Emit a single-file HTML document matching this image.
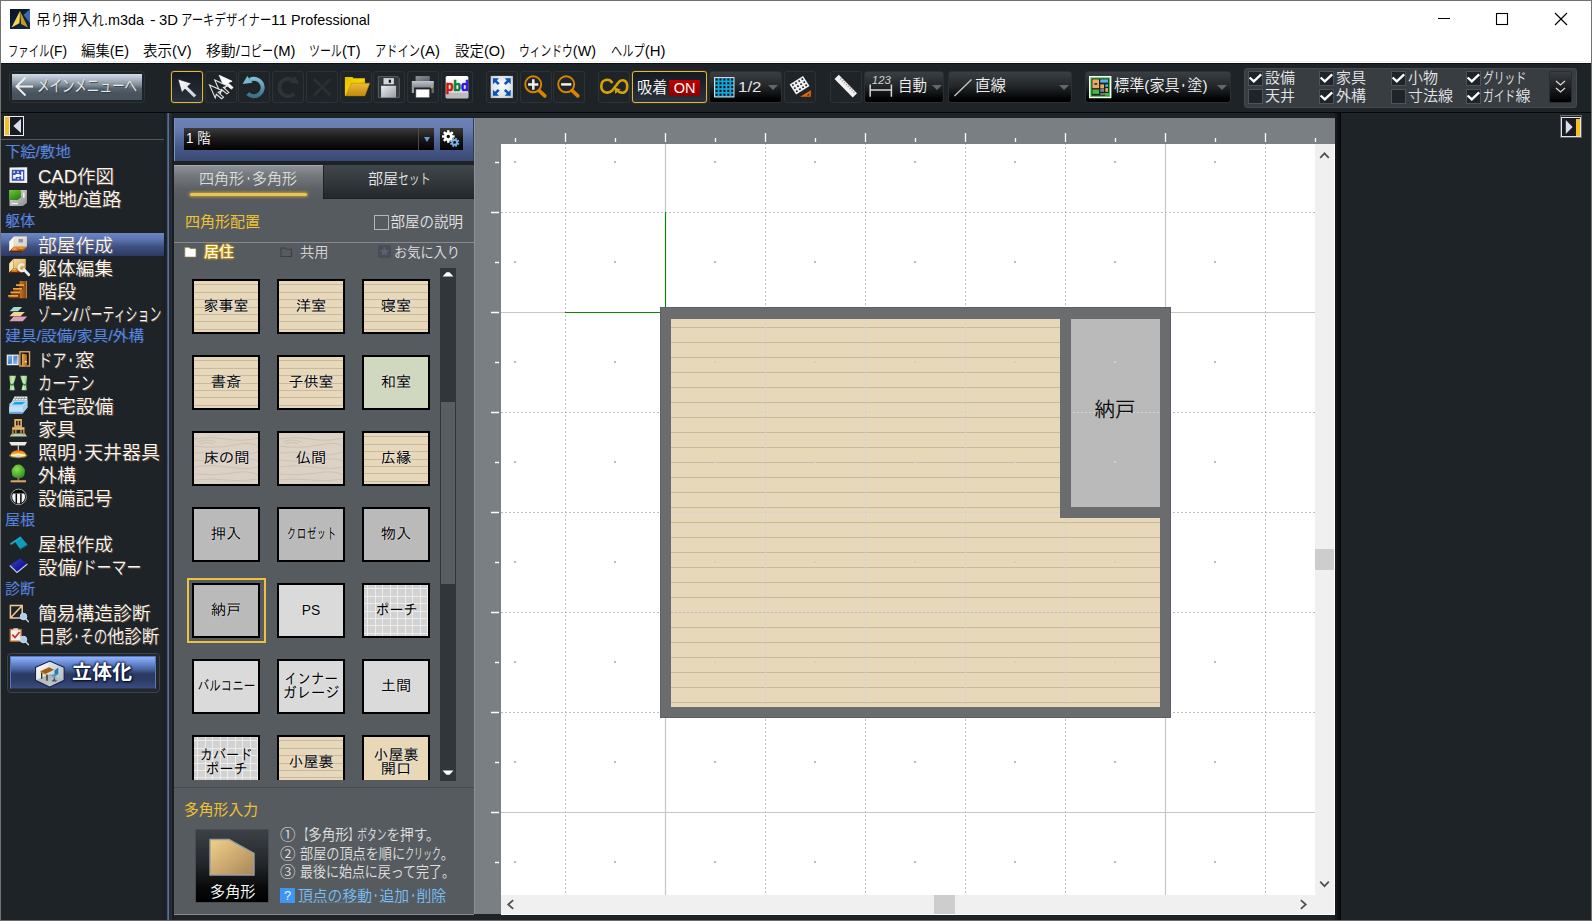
<!DOCTYPE html>
<html lang="ja"><head><meta charset="utf-8"><title>3D アーキデザイナー11 Professional</title>
<style>
html,body{margin:0;padding:0}
body{width:1592px;height:921px;position:relative;overflow:hidden;background:#1e2328;font-family:"Liberation Sans","Noto Sans CJK JP",sans-serif;font-size:14px;color:#fff;-webkit-font-smoothing:antialiased}
div,span,svg{box-sizing:border-box}
.a{position:absolute}
.kn{display:inline-block;transform-origin:0 50%;white-space:nowrap}
.t{position:absolute;white-space:nowrap;line-height:1}
#title{left:1px;top:1px;width:1590px;height:62px;background:#fff;color:#000;border-bottom:0}
#tb{left:1px;top:63px;width:1590px;height:50px;background:#1e2328;border-top:1px solid #0c1014;border-bottom:1px solid #050607}
.btn{position:absolute;top:71px;height:32px;border:1px solid #2d3237;border-radius:3px;background:#1f2429}
.dd{position:absolute;top:71px;height:32px;border:1px solid #2b3035;border-radius:3px;background:linear-gradient(#3a3f43 0%,#24282b 45%,#050505 88%,#000 100%)}
.dd .arr{position:absolute;top:12.5px;width:0;height:0;border-left:5.5px solid transparent;border-right:5.5px solid transparent;border-top:5px solid #63676b}
.sel{border:1px solid #e2b53c;background:linear-gradient(#161a20,#2a323c);box-shadow:0 0 1px #e2b53c}
.ck{position:absolute;width:15px;height:15px;border:1px solid #4e5358;background:#1f2428}
.ckt{position:absolute;font-size:15px;line-height:1;color:#e4e6e8;white-space:nowrap;font-weight:350}
.sh{position:absolute;left:5px;font-size:15px;line-height:1;color:#5a8be6;white-space:nowrap;text-shadow:1px 0 0 rgba(90,110,200,.35)}
.si{position:absolute;left:38px;font-size:19px;line-height:1;color:#f6f6f6;white-space:nowrap;text-shadow:1px 1px 0 rgba(205,140,70,.55)}
.tile{position:absolute;width:68px;height:55px;border:2px solid #000;color:#000;font-family:"Liberation Sans","IPAGothic",sans-serif;font-size:14px;line-height:14px;text-align:center;white-space:nowrap;overflow:hidden}
.tile span.l{position:absolute;left:0;right:0;text-shadow:0 0 2px rgba(255,255,255,.7)}
.wood{background:repeating-linear-gradient(180deg,#e8d8b8 0,#e8d8b8 6.4px,#cdbda4 6.4px,#cdbda4 7.4px) 0 -2.6px}
.ins{position:absolute;left:280px;font-size:14px;line-height:1;color:#e0e0e0;white-space:nowrap}
</style></head><body>

<div class="a" style="left:0;top:0;width:1592px;height:921px;border:1px solid #727272;border-bottom-color:#6a6a6a;z-index:50;pointer-events:none"></div>
<div id="title" class="a">
<div class="a" style="left:9px;top:8px;width:20px;height:20px"><svg width="20" height="20" viewBox="0 0 20 20"><defs><linearGradient id="ag" x1="0" y1="0" x2="1" y2="1"><stop offset="0" stop-color="#0a1424"/><stop offset="1" stop-color="#12284a"/></linearGradient><linearGradient id="ay" x1="0" y1="0" x2="1" y2="0"><stop offset="0" stop-color="#f8e87a"/><stop offset=".5" stop-color="#e8c030"/><stop offset="1" stop-color="#b8860c"/></linearGradient></defs><rect width="20" height="20" fill="url(#ag)"/><path d="M20 0v14L13.5 6z" fill="#3d6aa8"/><path d="M10 2L1.5 18.5l8.2-4.5z" fill="#f0d850"/><path d="M10 2l8 16.5-7-3.5z" fill="#c89a18"/><path d="M9.7 14L9.9 9l1.1 6.2z" fill="#0a1424"/></svg></div>
<div class="t" style="left:35.0px;top:10.5px;font-size:15px;font-weight:350;color:#000;transform:scaleX(0.9846);transform-origin:0 0;">吊<span class="kn" style="transform:scaleX(0.800);margin-right:-3.0px">り</span>押入<span class="kn" style="transform:scaleX(0.800);margin-right:-3.0px">れ</span></div>
<div class="t" style="left:103.0px;top:10.5px;font-size:15px;font-weight:350;color:#000;transform:scaleX(0.9592);transform-origin:0 0;">.m3da</div>
<div class="t" style="left:148.5px;top:10.5px;font-size:15px;font-weight:350;color:#000;transform:scaleX(1.1000);transform-origin:0 0;">-</div>
<div class="t" style="left:157.5px;top:10.5px;font-size:15px;font-weight:350;color:#000;transform:scaleX(0.9902);transform-origin:0 0;">3D</div>
<div class="t" style="left:180.0px;top:10.5px;font-size:15px;font-weight:350;color:#000;transform:scaleX(1.0134);transform-origin:0 0;"><span class="kn" style="transform:scaleX(0.750);margin-right:-30.0px">アーキデザイナー</span></div>
<div class="t" style="left:269.5px;top:10.5px;font-size:15px;font-weight:350;color:#000;transform:scaleX(1.0271);transform-origin:0 0;">11</div>
<div class="t" style="left:289.5px;top:10.5px;font-size:15px;font-weight:350;color:#000;transform:scaleX(0.9570);transform-origin:0 0;">Professional</div>
<svg class="a" style="left:1420px;top:0" width="170" height="37" viewBox="0 0 170 37"><path d="M17 17.5h12" stroke="#000" stroke-width="1"/><rect x="75.5" y="12.500" width="11" height="11" fill="none" stroke="#000" stroke-width="1.100"/><path d="M134 12l12 12M146 12l-12 12" stroke="#000" stroke-width="1.200"/></svg>
<div class="t" style="left:7.0px;top:42.0px;font-size:15px;font-weight:350;color:#000;transform:scaleX(0.9194);transform-origin:0 0;"><span class="kn" style="transform:scaleX(0.750);margin-right:-15.0px">ファイル</span>(F)</div>
<div class="t" style="left:80.0px;top:42.0px;font-size:15px;font-weight:350;color:#000;transform:scaleX(0.9600);transform-origin:0 0;">編集(E)</div>
<div class="t" style="left:142.0px;top:42.0px;font-size:15px;font-weight:350;color:#000;transform:scaleX(0.9700);transform-origin:0 0;">表示(V)</div>
<div class="t" style="left:205.0px;top:42.0px;font-size:15px;font-weight:350;color:#000;transform:scaleX(0.9890);transform-origin:0 0;">移動/<span class="kn" style="transform:scaleX(0.750);margin-right:-11.2px">コピー</span>(M)</div>
<div class="t" style="left:308.0px;top:42.0px;font-size:15px;font-weight:350;color:#000;transform:scaleX(0.9720);transform-origin:0 0;"><span class="kn" style="transform:scaleX(0.750);margin-right:-11.2px">ツール</span>(T)</div>
<div class="t" style="left:374.0px;top:42.0px;font-size:15px;font-weight:350;color:#000;transform:scaleX(0.9998);transform-origin:0 0;"><span class="kn" style="transform:scaleX(0.750);margin-right:-15.0px">アドイン</span>(A)</div>
<div class="t" style="left:454.0px;top:42.0px;font-size:15px;font-weight:350;color:#000;transform:scaleX(0.9676);transform-origin:0 0;">設定(O)</div>
<div class="t" style="left:518.0px;top:42.0px;font-size:15px;font-weight:350;color:#000;transform:scaleX(0.9580);transform-origin:0 0;"><span class="kn" style="transform:scaleX(0.750);margin-right:-18.8px">ウィンドウ</span>(W)</div>
<div class="t" style="left:610.0px;top:42.0px;font-size:15px;font-weight:350;color:#000;transform:scaleX(0.9971);transform-origin:0 0;"><span class="kn" style="transform:scaleX(0.750);margin-right:-11.2px">ヘルプ</span>(H)</div>
<div class="a" style="left:0;top:60px;width:1590px;height:1px;background:#f0f0f0"></div>
</div>
<div id="tb" class="a"></div>
<div class="a" style="left:9px;top:71px;width:136px;height:32px;border:1px solid #2d3237;border-radius:4px"></div>
<div class="a" style="left:11.5px;top:74px;width:130px;height:25.5px;background:linear-gradient(#d2dce6 0%,#a9b5c1 22%,#7c8894 44%,#56626e 56%,#48535e 75%,#47515b 100%)"><svg class="a" style="left:3.5px;top:2px" width="20" height="21" viewBox="0 0 20 21"><path d="M18 10.500H2M10.500 1.500L1.500 10.500l9 9" fill="none" stroke="#ececec" stroke-width="2"/></svg></div>
<div class="t" style="left:37.0px;top:77.5px;font-size:16.5px;font-weight:350;color:#ececec;transform:scaleX(1.0151);transform-origin:0 0;text-shadow:1px 1px 1px rgba(40,50,60,.8)"><span class="kn" style="transform:scaleX(0.750);margin-right:-33.0px">メインメニューへ</span></div>
<div class="btn sel" style="left:171.0px;width:32.0px"><svg class="a" style="left:0;top:0" width="30" height="30" viewBox="0 0 30 30"><defs><linearGradient id="sg" x1="0" y1="0" x2="1" y2="1"><stop offset="0" stop-color="#fff"/><stop offset="1" stop-color="#c8ccd0"/></linearGradient></defs><path d="M6 7.2L19.2 11.2L15.6 14.6L24.6 23.2L22 25.8L13 17L9.8 20.6z" fill="url(#sg)" stroke="#1a1e22" stroke-width=".6"/></svg></div>
<div class="btn " style="left:204.5px;width:32.0px"><svg class="a" style="left:0;top:0" width="30" height="30" viewBox="0 0 30 30"><path transform="translate(13.2,3.3)" d="M0 0L12.9 5.9L8.6 7.4L14 12.3L12.1 13.8L6.8 9.4L5.7 13z" fill="#fff" stroke="#fff" stroke-width=".8"/><path transform="translate(8.8,8.1)" d="M0 0L12.9 5.9L8.6 7.4L14 12.3L12.1 13.8L6.8 9.4L5.7 13z" fill="#1f2429" stroke="#e6e6e6" stroke-width="1.1"/><path transform="translate(3.5,12.9)" d="M0 0L12.9 5.9L8.6 7.4L14 12.3L12.1 13.8L6.8 9.4L5.7 13z" fill="#1f2429" stroke="#e6e6e6" stroke-width="1.1"/></svg></div>
<div class="btn " style="left:238.3px;width:32.0px"><svg class="a" style="left:0;top:0" width="30" height="30" viewBox="0 0 30 30"><defs><linearGradient id="ug" x1="0" y1="0" x2="0" y2="1"><stop offset="0" stop-color="#7cbcd6"/><stop offset="1" stop-color="#3a7088"/></linearGradient></defs><path d="M11.05 7.75A8.7 8.7 0 1 1 8.74 21.54" fill="none" stroke="url(#ug)" stroke-width="4"/><path d="M3.6 12L8.2 3.9L13.5 10.7z" fill="#78b8d2"/></svg></div>
<div class="btn " style="left:272.0px;width:32.0px"><svg class="a" style="left:0;top:0" width="30" height="30" viewBox="0 0 30 30"><path d="M18.95 7.75A8.7 8.7 0 1 0 21.26 21.54" fill="none" stroke="#2e3338" stroke-width="4"/><path d="M26.4 12L21.8 3.9L16.5 10.7z" fill="#2e3338"/></svg></div>
<div class="btn " style="left:305.8px;width:32.0px"><svg class="a" style="left:0;top:0" width="30" height="30" viewBox="0 0 30 30"><path d="M7 7l16.500 16.500M23.500 7L7 23.500" stroke="#2a2f34" stroke-width="3"/></svg></div>
<div class="btn " style="left:339.5px;width:32.0px"><svg class="a" style="left:0;top:0" width="30" height="30" viewBox="0 0 30 30"><defs><linearGradient id="og" x1="0" y1="0" x2="0" y2="1"><stop offset="0" stop-color="#ecba3a"/><stop offset="1" stop-color="#c48c0a"/></linearGradient><linearGradient id="ob" x1="0" y1="0" x2="1" y2="1"><stop offset="0" stop-color="#e6bc00"/><stop offset=".5" stop-color="#f6d400"/><stop offset="1" stop-color="#d8aa00"/></linearGradient></defs><path d="M3.9 5h7.600l1 1.300h11.400v17.600H3.900z" fill="url(#ob)"/><path d="M10.500 11.200H28.800L23.900 23.900H4.600z" fill="url(#og)" stroke="#a87808" stroke-width=".5"/></svg></div>
<div class="btn " style="left:373.3px;width:32.0px"><svg class="a" style="left:0;top:0" width="30" height="30" viewBox="0 0 30 30"><defs><linearGradient id="svg1" x1="0" y1="0" x2="1" y2="1"><stop offset="0" stop-color="#eceef0"/><stop offset="1" stop-color="#989ca4"/></linearGradient></defs><path d="M4.300 4.600h19.500l1.500 1.500v19.500h-21z" fill="#33383d" stroke="#5a5f64"/><rect x="9.500" y="6.100" width="10.400" height="6.200" fill="#d4d6da"/><rect x="14.800" y="7.700" width="2.200" height="3.100" fill="#14171a"/><rect x="7.100" y="13.800" width="15" height="11.700" fill="url(#svg1)"/></svg></div>
<div class="btn " style="left:407.0px;width:32.0px"><svg class="a" style="left:0;top:0" width="30" height="30" viewBox="0 0 30 30"><defs><linearGradient id="pg" x1="0" y1="0" x2="0" y2="1"><stop offset="0" stop-color="#c0c4cc"/><stop offset="1" stop-color="#868a92"/></linearGradient><linearGradient id="pt" x1="0" y1="0" x2="1" y2="1"><stop offset="0" stop-color="#9298a0"/><stop offset="1" stop-color="#585e66"/></linearGradient></defs><rect x="7.600" y="4.100" width="14.200" height="5" fill="url(#pt)"/><rect x="3.800" y="9" width="22" height="6.500" fill="url(#pg)"/><rect x="3.800" y="15" width="2.200" height="6" fill="#9a9ea6"/><rect x="23.600" y="15" width="2.200" height="6" fill="#6a6e76"/><rect x="8" y="17.300" width="13.200" height="8" fill="#fff" stroke="#8a8e96" stroke-width=".6"/><rect x="22.800" y="14.600" width="2" height="1.400" fill="#7ad838"/><rect x="23" y="16" width="1.400" height="1" fill="#c03060"/></svg></div>
<div class="btn " style="left:440.8px;width:32.0px"><svg class="a" style="left:0;top:0" width="30" height="30" viewBox="0 0 30 30"><defs><linearGradient id="pbdg" gradientUnits="userSpaceOnUse" x1="3.700" y1="0" x2="26.700" y2="0"><stop offset="0" stop-color="#d01010"/><stop offset=".335" stop-color="#d01010"/><stop offset=".335" stop-color="#0a7a30"/><stop offset=".665" stop-color="#0a7a30"/><stop offset=".665" stop-color="#2a10e0"/><stop offset="1" stop-color="#2a10e0"/></linearGradient><linearGradient id="pb" x1="0" y1="0" x2="0" y2="1"><stop offset="0" stop-color="#fff"/><stop offset="1" stop-color="#dcdcdc"/></linearGradient></defs><rect x="3.700" y="4.100" width="22.600" height="22.200" rx="1.500" fill="url(#pb)"/><rect x="3.700" y="20.600" width="22.600" height="5.700" fill="#bcbcbc"/><text x="3.700" y="18.900" font-family="Liberation Sans,sans-serif" font-weight="700" font-size="15" textLength="23" lengthAdjust="spacingAndGlyphs" fill="url(#pbdg)" stroke="url(#pbdg)" stroke-width=".7">pbd</text></svg></div>
<div class="btn " style="left:486.0px;width:32.0px"><svg class="a" style="left:0;top:0" width="30" height="30" viewBox="0 0 30 30"><defs><radialGradient id="fg" cx=".5" cy=".45" r=".75"><stop offset="0" stop-color="#fcfdff"/><stop offset=".6" stop-color="#dde3ea"/><stop offset="1" stop-color="#b4bac2"/></radialGradient></defs><rect x="3.700" y="3.900" width="22.200" height="22.200" fill="url(#fg)"/><path d="M5.9 6.3L11.9 6.3L9.8 8.4L12.7 11.3L10.9 13.1L8.0 10.2L5.9 12.3z" fill="#0a52b4"/><path d="M23.7 6.3L17.7 6.3L19.8 8.4L16.9 11.3L18.7 13.1L21.6 10.2L23.7 12.3z" fill="#0a52b4"/><path d="M5.9 23.7L11.9 23.7L9.8 21.6L12.7 18.7L10.9 16.9L8.0 19.8L5.9 17.7z" fill="#0a52b4"/><path d="M23.7 23.7L17.7 23.7L19.8 21.6L16.9 18.7L18.7 16.9L21.6 19.8L23.7 17.7z" fill="#0a52b4"/></svg></div>
<div class="btn " style="left:519.5px;width:32.0px"><svg class="a" style="left:0;top:0" width="30" height="30" viewBox="0 0 30 30"><circle cx="12.200" cy="12.300" r="8" fill="#20252a" stroke="#d88400" stroke-width="1.900"/><path d="M18.200 18.600L23.800 23.900" stroke="#d88400" stroke-width="3.600" stroke-linecap="round"/><path d="M12.300 7.200v10.600M7.100 12.400h10.200" stroke="#eef0f2" stroke-width="2.500"/></svg></div>
<div class="btn " style="left:553.0px;width:32.0px"><svg class="a" style="left:0;top:0" width="30" height="30" viewBox="0 0 30 30"><circle cx="12.200" cy="12.300" r="8" fill="#20252a" stroke="#d88400" stroke-width="1.900"/><path d="M18.200 18.600L23.800 23.900" stroke="#d88400" stroke-width="3.600" stroke-linecap="round"/><path d="M7.100 12.400h10.200" stroke="#eef0f2" stroke-width="2.500"/></svg></div>
<div class="btn " style="left:598.0px;width:32.0px"><svg class="a" style="left:0;top:0" width="30" height="30" viewBox="0 0 30 30"><path d="M12.800 10.200C10.500 6.600 2.300 6.600 2.300 14.200S10.500 21.800 13.500 18.200L19.200 10.800C22 6.900 28.200 7.400 28.200 14.200S23.500 21.600 20 19.800" fill="none" stroke="#d8a200" stroke-width="2.600" stroke-linecap="round"/><path d="M15.600 15.400L21.800 17.400L16.200 21.800z" fill="#d8a200"/></svg></div>
<div class="btn sel" style="left:632px;width:75px"><div class="a" style="left:36px;top:8px;width:31px;height:16px;background:linear-gradient(#c00000,#8a0000);color:#fff;font-size:14.5px;line-height:17px;text-align:center;font-weight:400">ON</div></div>
<div class="dd" style="left:709px;width:73px"><svg class="a" style="left:3.9px;top:5px" width="21" height="21" viewBox="0 0 21 21"><rect x=".5" y=".5" width="19.500" height="19.500" fill="#12a6d6" stroke="#d4d8dc" stroke-width="1"/><rect x="1.6" y="1.5" width="2" height="2" fill="#0a0406"/><rect x="1.6" y="5.3" width="2" height="2" fill="#0a0406"/><rect x="1.6" y="9.1" width="2" height="2" fill="#0a0406"/><rect x="1.6" y="12.9" width="2" height="2" fill="#0a0406"/><rect x="1.6" y="16.7" width="2" height="2" fill="#0a0406"/><rect x="5.5" y="1.5" width="2" height="2" fill="#0a0406"/><rect x="5.5" y="5.3" width="2" height="2" fill="#0a0406"/><rect x="5.5" y="9.1" width="2" height="2" fill="#0a0406"/><rect x="5.5" y="12.9" width="2" height="2" fill="#0a0406"/><rect x="5.5" y="16.7" width="2" height="2" fill="#0a0406"/><rect x="9.4" y="1.5" width="2" height="2" fill="#0a0406"/><rect x="9.4" y="5.3" width="2" height="2" fill="#0a0406"/><rect x="9.4" y="9.1" width="2" height="2" fill="#0a0406"/><rect x="9.4" y="12.9" width="2" height="2" fill="#0a0406"/><rect x="9.4" y="16.7" width="2" height="2" fill="#0a0406"/><rect x="13.3" y="1.5" width="2" height="2" fill="#0a0406"/><rect x="13.3" y="5.3" width="2" height="2" fill="#0a0406"/><rect x="13.3" y="9.1" width="2" height="2" fill="#0a0406"/><rect x="13.3" y="12.9" width="2" height="2" fill="#0a0406"/><rect x="13.3" y="16.7" width="2" height="2" fill="#0a0406"/><rect x="17.2" y="1.5" width="2" height="2" fill="#0a0406"/><rect x="17.2" y="5.3" width="2" height="2" fill="#0a0406"/><rect x="17.2" y="9.1" width="2" height="2" fill="#0a0406"/><rect x="17.2" y="12.9" width="2" height="2" fill="#0a0406"/><rect x="17.2" y="16.7" width="2" height="2" fill="#0a0406"/></svg><div class="arr" style="left:58px"></div></div>
<div class="btn " style="left:784.3px;width:32.0px"><svg class="a" style="left:0;top:0" width="30" height="30" viewBox="0 0 30 30"><g transform="translate(4.600,12.400) rotate(-32.400)"><rect width="15.900" height="12.100" fill="#f2f2f2"/><rect x="1.6" y="1.5" width="1.700" height="1.700" fill="#14181c"/><rect x="1.6" y="5.1" width="1.700" height="1.700" fill="#14181c"/><rect x="1.6" y="8.7" width="1.700" height="1.700" fill="#14181c"/><rect x="5.3" y="1.5" width="1.700" height="1.700" fill="#14181c"/><rect x="5.3" y="5.1" width="1.700" height="1.700" fill="#14181c"/><rect x="5.3" y="8.7" width="1.700" height="1.700" fill="#14181c"/><rect x="9.0" y="1.5" width="1.700" height="1.700" fill="#14181c"/><rect x="9.0" y="5.1" width="1.700" height="1.700" fill="#14181c"/><rect x="9.0" y="8.7" width="1.700" height="1.700" fill="#14181c"/><rect x="12.7" y="1.5" width="1.700" height="1.700" fill="#14181c"/><rect x="12.7" y="5.1" width="1.700" height="1.700" fill="#14181c"/><rect x="12.7" y="8.7" width="1.700" height="1.700" fill="#14181c"/></g><path d="M15.100 24.800H25.900V18.200z" fill="#e86800"/><path d="M21.500 23.400h2.800v-1.800z" fill="#1f2429"/></svg></div>
<div class="btn " style="left:829.5px;width:32.0px"><svg class="a" style="left:0;top:0" width="30" height="30" viewBox="0 0 30 30"><g transform="translate(6.700,6) rotate(45.500)"><rect x="-1.500" y="-3" width="26" height="6" fill="#f2f2f2"/><rect x="2.2" y="-3" width="1.100" height="2.400" fill="#a4a8ac"/><rect x="4.9" y="-3" width="1.100" height="2.400" fill="#a4a8ac"/><rect x="7.6" y="-3" width="1.100" height="2.400" fill="#a4a8ac"/><rect x="10.3" y="-3" width="1.100" height="2.400" fill="#a4a8ac"/><rect x="13.0" y="-3" width="1.100" height="2.400" fill="#a4a8ac"/><rect x="15.7" y="-3" width="1.100" height="2.400" fill="#a4a8ac"/><rect x="18.4" y="-3" width="1.100" height="2.400" fill="#a4a8ac"/><rect x="21.1" y="-3" width="1.100" height="2.400" fill="#a4a8ac"/></g></svg></div>
<div class="dd" style="left:863.5px;width:80.5px"><svg class="a" style="left:3px;top:2px" width="28" height="28" viewBox="0 0 28 28"><text x="3.800" y="9.800" font-family="Liberation Sans,sans-serif" font-style="italic" font-size="11" fill="#d0d0d0" textLength="19" lengthAdjust="spacingAndGlyphs">123</text><path d="M2.200 10.400v12.400M23.400 10.400v12.400M2.200 15.900H23.400" stroke="#d8d8d8" stroke-width="1.500" fill="none"/></svg><div class="arr" style="left:67px"></div></div>
<div class="dd" style="left:947.5px;width:124px"><svg class="a" style="left:4px;top:6px" width="20" height="20" viewBox="0 0 20 20"><path d="M1.5 18L18.5 1.5" stroke="#c8c8c8" stroke-width="1.3"/></svg><div class="arr" style="left:110px"></div></div>
<div class="dd" style="left:1084.5px;width:146.5px"><svg class="a" style="left:3.500px;top:3.900px" width="23" height="23" viewBox="0 0 23 23"><rect x="0" y="0" width="22.400" height="22.200" fill="#fff"/><rect x="1.300" y="1.300" width="19.800" height="19.600" fill="#48c64e"/><rect x="2.500" y="2.500" width="17.400" height="17.200" fill="#1a261c"/><rect x="3.400" y="3.400" width="6.600" height="8.700" fill="#eea866"/><rect x="5.300" y="7.200" width="2.900" height="1.500" fill="#1a261c"/><rect x="11.300" y="3.400" width="7.700" height="3.200" fill="#56b0f8"/><rect x="16.400" y="8.400" width="2.600" height="2.400" fill="#56b0f8"/><rect x="11.300" y="8.400" width="3.700" height="4" fill="#eea866"/><rect x="16.400" y="12.100" width="2.600" height="3.700" fill="#eea866"/><rect x="11.300" y="12.900" width="3.700" height="2.900" fill="#7a8490"/><rect x="3.400" y="13.500" width="6.600" height="4.400" fill="#46b84e"/><rect x="11.300" y="17.200" width="4.800" height="1.500" fill="#8a92a0"/><rect x="16.100" y="17" width="3.800" height="2.700" fill="#46b84e"/></svg><div class="arr" style="left:131px"></div></div>
<div class="t" style="left:637.0px;top:80.0px;font-size:15.5px;font-weight:350;color:#fff;transform:scaleX(0.9834);transform-origin:0 0;">吸着</div>
<div class="t" style="left:738.0px;top:78.6px;font-size:15.5px;font-weight:400;color:#e4e4e4;transform:scaleX(1.0899);transform-origin:0 0;">1/2</div>
<div class="t" style="left:898.0px;top:77.7px;font-size:15.5px;font-weight:350;color:#f0f0f0;transform:scaleX(0.9350);transform-origin:0 0;">自動</div>
<div class="t" style="left:974.5px;top:78.2px;font-size:15.5px;font-weight:350;color:#f0f0f0;transform:scaleX(0.9995);transform-origin:0 0;">直線</div>
<div class="t" style="left:1113.5px;top:78.0px;font-size:15.5px;font-weight:350;color:#f0f0f0;transform:scaleX(0.9784);transform-origin:0 0;">標準(家具<span class="kn" style="transform:scaleX(0.500);margin-right:-7.8px">・</span>塗)</div>
<div class="a" style="left:1244px;top:68px;width:333px;height:40px;border:1px solid #464a4e;border-radius:3px;background:#383d42"></div>
<div class="ck" style="left:1248px;top:71px"><svg class="a" style="left:-1px;top:-1px" width="15" height="15" viewBox="0 0 15 15"><path d="M1.600 6.500L5.800 10.400L13.200 3.300" fill="none" stroke="#fff" stroke-width="2.300"/></svg></div>
<div class="ckt" style="left:1265px;top:70px">設備</div>
<div class="ck" style="left:1248px;top:89px"></div>
<div class="ckt" style="left:1265px;top:88px">天井</div>
<div class="ck" style="left:1319px;top:71px"><svg class="a" style="left:-1px;top:-1px" width="15" height="15" viewBox="0 0 15 15"><path d="M1.600 6.500L5.800 10.400L13.200 3.300" fill="none" stroke="#fff" stroke-width="2.300"/></svg></div>
<div class="ckt" style="left:1336px;top:70px">家具</div>
<div class="ck" style="left:1319px;top:89px"><svg class="a" style="left:-1px;top:-1px" width="15" height="15" viewBox="0 0 15 15"><path d="M1.600 6.500L5.800 10.400L13.200 3.300" fill="none" stroke="#fff" stroke-width="2.300"/></svg></div>
<div class="ckt" style="left:1336px;top:88px">外構</div>
<div class="ck" style="left:1391px;top:71px"><svg class="a" style="left:-1px;top:-1px" width="15" height="15" viewBox="0 0 15 15"><path d="M1.600 6.500L5.800 10.400L13.200 3.300" fill="none" stroke="#fff" stroke-width="2.300"/></svg></div>
<div class="ckt" style="left:1408px;top:70px">小物</div>
<div class="ck" style="left:1391px;top:89px"></div>
<div class="ckt" style="left:1408px;top:88px">寸法線</div>
<div class="ck" style="left:1466px;top:71px"><svg class="a" style="left:-1px;top:-1px" width="15" height="15" viewBox="0 0 15 15"><path d="M1.600 6.500L5.800 10.400L13.200 3.300" fill="none" stroke="#fff" stroke-width="2.300"/></svg></div>
<div class="ckt" style="left:1483px;top:70px"><span class="kn" style="transform:scaleX(0.720);margin-right:-16.8px">グリッド</span></div>
<div class="ck" style="left:1466px;top:89px"><svg class="a" style="left:-1px;top:-1px" width="15" height="15" viewBox="0 0 15 15"><path d="M1.600 6.500L5.800 10.400L13.200 3.300" fill="none" stroke="#fff" stroke-width="2.300"/></svg></div>
<div class="ckt" style="left:1483px;top:88px"><span class="kn" style="transform:scaleX(0.720);margin-right:-12.6px">ガイド</span>線</div>
<div class="a" style="left:1549px;top:71px;width:23px;height:32px;border:1px solid #2a2e32;border-radius:2px;background:linear-gradient(#3a3e42,#000)"><svg class="a" style="left:4px;top:7px" width="13" height="16" viewBox="0 0 13 16"><path d="M2 2l4.5 4L11 2M2 9l4.5 4L11 9" fill="none" stroke="#d8d8d8" stroke-width="1.3"/></svg></div>
<div class="a" style="left:1px;top:113px;width:163px;height:807px;background:#1e2328"></div>
<div class="a" style="left:164px;top:113px;width:10px;height:807px;background:linear-gradient(90deg,#181b1f 0,#181b1f 1px,#1f2428 1px,#1f2428 3px,#41557c 3px,#41557c 4px,#566e9c 4px,#566e9c 5px,#272c30 5px,#272c30 8px,#1a1d22 8px)"></div>
<div class="a" style="left:4px;top:116px;width:20px;height:20px;border:1px solid #ececf2;background:#181c20"><div class="a" style="left:0;top:0;width:4px;height:18px;background:#f4c020"></div><div class="a" style="left:4px;top:0;width:1px;height:18px;background:#e8e8f0"></div><svg class="a" style="left:6px;top:1px" width="12" height="16" viewBox="0 0 12 16"><path d="M10 1v14L2.300 8z" fill="#dcdcf0"/></svg></div>
<div class="a" style="left:1px;top:139px;width:163px;height:1px;background:#53575b"></div>
<div class="t" style="left:4.5px;top:143.5px;font-size:15px;font-weight:350;color:#5a8be6;transform:scaleX(1.0207);transform-origin:0 0;text-shadow:1px 0 0 rgba(90,110,200,.35)">下絵/敷地</div>
<div class="a" style="left:8px;top:166px;width:22px;height:20px"><svg width="24" height="22" viewBox="0 0 24 22" style="overflow:visible"><path d="M1.500 1.500L19.200 1.200V17.100L1.500 16.800z" fill="#f2f2f6"/><rect x="3.800" y="3.800" width="12.500" height="11" fill="#3a56b0"/><path d="M13.200 5.600h1.800v7.600h-1.800zM5.100 9h2.600v3.700H5.100zM7.700 8h3.900v3.100H7.700zM5.300 5.300h1.600v1.500H5.300zM9 5.600h2v1.200H9zM9.300 12.200h2v1.300h-2zM11.600 9h1.600v1.200h-1.600z" fill="#f4f4fa"/></svg></div>
<div class="t" style="left:38.0px;top:167.8px;font-size:18px;font-weight:350;color:#f6f6f6;transform:scaleX(1.0268);transform-origin:0 0;text-shadow:1px 1px 0 rgba(200,135,70,.42)">CAD作図</div>
<div class="a" style="left:8px;top:189px;width:22px;height:20px"><svg width="24" height="22" viewBox="0 0 24 22" style="overflow:visible"><defs><linearGradient id="sgr" x1="0" y1="0" x2=".6" y2="1"><stop offset="0" stop-color="#6cc838"/><stop offset="1" stop-color="#2e8210"/></linearGradient><linearGradient id="sgy" x1="0" y1="0" x2="1" y2="1"><stop offset="0" stop-color="#e0e0e0"/><stop offset="1" stop-color="#8e8e8e"/></linearGradient></defs><path d="M1.500 1.100h17.400v12.900l-4 3H1.500z" fill="url(#sgy)"/><path d="M1.500 1.100h11.400v7.400L9.500 11H1.500z" fill="url(#sgr)"/><rect x="15" y="3.700" width="1.600" height="5" fill="#f4f4f4"/><rect x="3.800" y="13.900" width="6.200" height="1.200" fill="#f4f4f4"/></svg></div>
<div class="t" style="left:38.0px;top:190.8px;font-size:18px;font-weight:350;color:#f6f6f6;transform:scaleX(1.0842);transform-origin:0 0;text-shadow:1px 1px 0 rgba(200,135,70,.42)">敷地/道路</div>
<div class="t" style="left:4.5px;top:212.5px;font-size:15px;font-weight:350;color:#5a8be6;transform:scaleX(0.9995);transform-origin:0 0;text-shadow:1px 0 0 rgba(90,110,200,.35)">躯体</div>
<div class="a" style="left:1px;top:233px;width:163px;height:23px;background:linear-gradient(#6d86c6 0%,#5a72ae 30%,#3e5080 60%,#2c3a62 100%)"></div>
<div class="a" style="left:8px;top:235px;width:22px;height:20px"><svg width="24" height="22" viewBox="0 0 24 22" style="overflow:visible"><defs><linearGradient id="rm1" x1="0" y1="0" x2="1" y2="1"><stop offset="0" stop-color="#f0eadc"/><stop offset="1" stop-color="#d8d0c0"/></linearGradient><linearGradient id="rm1f" x1="0" y1="0" x2="0" y2="1"><stop offset="0" stop-color="#e89a30"/><stop offset="1" stop-color="#8a2a08"/></linearGradient></defs><rect x="5.900" y="1.400" width="13" height="10.400" fill="url(#rm1)"/><path d="M1.200 6.500L5.900 1.400V11.600L1.200 16.500z" fill="#fbf6ea"/><path d="M5.900 11.600H18.900L14.500 17H1.200z" fill="url(#rm1f)"/><path d="M4 14.800h5.500M10.800 13.200h4.200M4.800 13.200h3.600" stroke="#f0b040" stroke-width="1.100"/><path d="M2.200 16.500h12" stroke="#6a1804" stroke-width=".9"/><rect x="10" y="4" width="5" height="3.400" fill="#8492a2"/><path d="M10 4v3.400" stroke="#f4f4f4" stroke-width=".9"/></svg></div>
<div class="t" style="left:38.0px;top:236.8px;font-size:18px;font-weight:350;color:#f6f6f6;transform:scaleX(1.0417);transform-origin:0 0;text-shadow:1px 1px 0 rgba(200,135,70,.42)">部屋作成</div>
<div class="a" style="left:8px;top:258px;width:22px;height:20px"><svg width="24" height="22" viewBox="0 0 24 22" style="overflow:visible"><g transform="translate(0,-.4) scale(.94,.9)"><defs><linearGradient id="rm2" x1="0" y1="0" x2="1" y2="1"><stop offset="0" stop-color="#f4dc98"/><stop offset="1" stop-color="#d4aa58"/></linearGradient><linearGradient id="rm2f" x1="0" y1="0" x2="0" y2="1"><stop offset="0" stop-color="#e89a30"/><stop offset="1" stop-color="#8a2a08"/></linearGradient></defs><rect x="5.900" y="1.400" width="13" height="10.400" fill="url(#rm2)"/><path d="M1.200 6.500L5.900 1.400V11.600L1.200 16.500z" fill="#f8e4a8"/><path d="M5.900 11.600H18.900L14.500 17H1.200z" fill="url(#rm2f)"/><path d="M4 14.800h5.500M10.800 13.200h4.200M4.800 13.200h3.600" stroke="#f0b040" stroke-width="1.100"/><path d="M2.200 16.500h12" stroke="#6a1804" stroke-width=".9"/></g><path d="M15.300 6.700A3.300 3.300 0 1 0 16.600 11.800" fill="none" stroke="#eef0f2" stroke-width="2.200" stroke-linecap="round"/><path d="M15.800 11.500L20.800 16.800" stroke="#e8eaec" stroke-width="2.700" stroke-linecap="round"/></svg></div>
<div class="t" style="left:38.0px;top:259.8px;font-size:18px;font-weight:350;color:#f6f6f6;transform:scaleX(1.0417);transform-origin:0 0;text-shadow:1px 1px 0 rgba(200,135,70,.42)">躯体編集</div>
<div class="a" style="left:8px;top:281px;width:22px;height:20px"><svg width="24" height="22" viewBox="0 0 24 22" style="overflow:visible"><defs><linearGradient id="stg" x1="0" y1="0" x2="1" y2="0"><stop offset="0" stop-color="#c87420"/><stop offset=".85" stop-color="#8a4a10"/><stop offset="1" stop-color="#e8b070"/></linearGradient></defs><path d="M11.600 0h7.300v17.300H11.600z" fill="url(#stg)"/><path d="M8.500 5H15V8.700H5.500V12.200H3V15.700H.8V17.300H12V5z" fill="#7a3a0a"/><path d="M8 3.300h8v1.700H8zM5 7h9v1.700H5zM2.500 10.500H12v1.700H2.500zM.2 14H10v1.700H.2z" fill="#eaa444"/></svg></div>
<div class="t" style="left:38.0px;top:282.8px;font-size:18px;font-weight:350;color:#f6f6f6;transform:scaleX(1.0556);transform-origin:0 0;text-shadow:1px 1px 0 rgba(200,135,70,.42)">階段</div>
<div class="a" style="left:8px;top:304px;width:22px;height:20px"><svg width="24" height="22" viewBox="0 0 24 22" style="overflow:visible"><path d="M1.700 7.300L5.600 2.900H14.200L10 7.300z" fill="#a2dcd8"/><path d="M1.300 12.300L5.600 7.900H16.800L12.500 12.300z" fill="#f0d494"/><path d="M1.300 17.200L5.600 12.600H19.200L14.800 17.200z" fill="#dca0b8"/></svg></div>
<div class="t" style="left:38.0px;top:305.8px;font-size:18px;font-weight:350;color:#f6f6f6;transform:scaleX(1.0684);transform-origin:0 0;text-shadow:1px 1px 0 rgba(200,135,70,.42)"><span class="kn" style="transform:scaleX(0.620);margin-right:-20.5px">ゾーン</span>/<span class="kn" style="transform:scaleX(0.620);margin-right:-47.9px">パーティション</span></div>
<div class="t" style="left:4.5px;top:327.5px;font-size:15px;font-weight:350;color:#5a8be6;transform:scaleX(1.0489);transform-origin:0 0;text-shadow:1px 0 0 rgba(90,110,200,.35)">建具/設備/家具/外構</div>
<div class="a" style="left:8px;top:350px;width:22px;height:20px"><svg width="24" height="22" viewBox="0 0 24 22" style="overflow:visible"><defs><linearGradient id="wg" x1="0" y1="0" x2="1" y2="1"><stop offset="0" stop-color="#8ab8ec"/><stop offset=".5" stop-color="#4a88d0"/><stop offset="1" stop-color="#a8d0f4"/></linearGradient><linearGradient id="dg" x1="0" y1="0" x2="1" y2="0"><stop offset="0" stop-color="#e8a850"/><stop offset="1" stop-color="#a86418"/></linearGradient></defs><rect x="-.7" y="5.200" width="10.800" height="9.400" fill="url(#wg)" stroke="#eceef2" stroke-width="1.200"/><path d="M4.700 5.200v9.400" stroke="#eceef2" stroke-width="1.300"/><rect x="11.900" y="1.800" width="9.600" height="14.200" fill="#14100c" stroke="#dca860" stroke-width="1.400"/><path d="M13.900 3.400l5.100 1v12.700l-5.100 -1.300z" fill="url(#dg)"/><rect x="17" y="11" width="1.600" height="1.300" fill="#fff"/></svg></div>
<div class="t" style="left:38.0px;top:351.8px;font-size:18px;font-weight:350;color:#f6f6f6;transform:scaleX(1.0968);transform-origin:0 0;text-shadow:1px 1px 0 rgba(200,135,70,.42)"><span class="kn" style="transform:scaleX(0.720);margin-right:-10.1px">ドア</span><span class="kn" style="transform:scaleX(0.420);margin-right:-10.4px">・</span>窓</div>
<div class="a" style="left:8px;top:373px;width:22px;height:20px"><svg width="24" height="22" viewBox="0 0 24 22" style="overflow:visible"><defs><linearGradient id="cg" x1="0" y1="0" x2="1" y2="0"><stop offset="0" stop-color="#98d088"/><stop offset=".5" stop-color="#c8ecb8"/><stop offset="1" stop-color="#90c880"/></linearGradient></defs><path d="M1.400 2.700H8C7.700 6 6.200 8.600 5.300 11.200C6 13 6.700 15 6.800 17.200H1.600C1.900 15 2.200 13 2.200 11.200C2 8.600 1.400 6 1.400 2.700z" fill="url(#cg)"/><path d="M19 2.700H12.400C12.700 6 14.200 8.600 15.100 11.200C14.400 13 13.700 15 13.600 17.200H18.800C18.500 15 18.200 13 18.200 11.200C18.400 8.600 19 6 19 2.700z" fill="url(#cg)"/><path d="M2 10.800l2 1.400l1.400-1.600M18.400 10.800l-2 1.400l-1.400-1.600" stroke="#1e8a2e" stroke-width="1.200" fill="none"/></svg></div>
<div class="t" style="left:38.0px;top:374.8px;font-size:18px;font-weight:350;color:#f6f6f6;transform:scaleX(1.0328);transform-origin:0 0;text-shadow:1px 1px 0 rgba(200,135,70,.42)"><span class="kn" style="transform:scaleX(0.760);margin-right:-17.3px">カーテン</span></div>
<div class="a" style="left:8px;top:396px;width:22px;height:20px"><svg width="24" height="22" viewBox="0 0 24 22" style="overflow:visible"><path d="M6.500 .5H19.400V7L17 9.500H1.800z" fill="#eceef0"/><path d="M9 .5L4.500 9.500M11.600 .5L7.800 9.500M14.200 .5L11 9.500M16.800 .5L14.200 9.500M5.500 2.500H19.400M4.300 4.700H19.400M3 7H19.400" stroke="#868c92" stroke-width=".7" fill="none"/><path d="M1.400 7.800L6 4.500H19.400V11.500L14.700 17.300H1.400z" fill="#b4d8f4"/><path d="M4 8.400L7 6H17.600L14 8.400z" fill="#12a8dc"/><path d="M1.400 10.500H14.700L19.400 6.500V11.500L14.700 17.300H1.400z" fill="#a0ccf0"/><path d="M1.400 10.500H14.700V17.300H1.400z" fill="#c2e0f8"/><path d="M1.400 15.800H14.700V17.300H1.400z" fill="#6aa8e0"/></svg></div>
<div class="t" style="left:38.0px;top:397.8px;font-size:18px;font-weight:350;color:#f6f6f6;transform:scaleX(1.0486);transform-origin:0 0;text-shadow:1px 1px 0 rgba(200,135,70,.42)">住宅設備</div>
<div class="a" style="left:8px;top:419px;width:22px;height:20px"><svg width="24" height="22" viewBox="0 0 24 22" style="overflow:visible"><rect x="6.300" y="0" width="7.600" height="8.400" fill="#e2b26a"/><rect x="8" y="1.800" width="1.700" height="4.600" fill="#3a2a18"/><rect x="10.700" y="1.800" width="1.700" height="4.600" fill="#3a2a18"/><path d="M1.700 17.400L4 14.500H17L19 17.400z" fill="#b4d4ac"/><path d="M4.200 8.200H16.500V10.800H4.200z" fill="#e8bc74"/><path d="M4.900 10.800v5.100M7.800 10.800v3.700M13 10.800v3.700M15.800 10.800v5.100" stroke="#c88c3c" stroke-width="1.500"/></svg></div>
<div class="t" style="left:38.0px;top:420.8px;font-size:18px;font-weight:350;color:#f6f6f6;transform:scaleX(1.0417);transform-origin:0 0;text-shadow:1px 1px 0 rgba(200,135,70,.42)">家具</div>
<div class="a" style="left:8px;top:442px;width:22px;height:20px"><svg width="24" height="22" viewBox="0 0 24 22" style="overflow:visible"><path d="M1.200 0H19L17 3.600H3.200z" fill="#ecece4"/><path d="M10.300 3.600v5.200" stroke="#dcdcd8" stroke-width="1.200"/><defs><radialGradient id="lg" cx=".5" cy="1" r=".9"><stop offset="0" stop-color="#fff8d0"/><stop offset=".45" stop-color="#f8b030"/><stop offset="1" stop-color="#e86a10"/></radialGradient></defs><ellipse cx="10.300" cy="13.600" rx="9.300" ry="2.600" fill="#e8b020" opacity=".55"/><path d="M2.700 13.300C2.700 10 6.300 8.200 10.300 8.200S18 10 18 13.300z" fill="url(#lg)"/><ellipse cx="10.300" cy="13.400" rx="7.600" ry="1.700" fill="#fff2b8"/><rect x="8.600" y="13.200" width="3.400" height="2.200" fill="#c0d0e8"/></svg></div>
<div class="t" style="left:38.0px;top:443.8px;font-size:18px;font-weight:350;color:#f6f6f6;transform:scaleX(1.0553);transform-origin:0 0;text-shadow:1px 1px 0 rgba(200,135,70,.42)">照明<span class="kn" style="transform:scaleX(0.420);margin-right:-10.4px">・</span>天井器具</div>
<div class="a" style="left:8px;top:465px;width:22px;height:20px"><svg width="24" height="22" viewBox="0 0 24 22" style="overflow:visible"><defs><radialGradient id="tg" cx=".4" cy=".35" r=".7"><stop offset="0" stop-color="#8ee04c"/><stop offset="1" stop-color="#2c921c"/></radialGradient></defs><path d="M10.300 -.6C13 -.6 14.500 1 15.500 2.500C17.300 4 17.200 7 16.500 8.500C16.800 11 14.500 13 12.500 12.800C11 13.600 9 13.400 8 12.600C5.500 12.600 3.600 10.500 4 8.200C3 6 3.800 3.600 5.400 2.600C6.300 .6 8 -.6 10.300 -.6z" fill="url(#tg)"/><rect x="9.400" y="11" width="1.900" height="5" fill="#8a6a58"/><path d="M2.700 16.300H18" stroke="#dcaa62" stroke-width="2"/></svg></div>
<div class="t" style="left:38.0px;top:466.8px;font-size:18px;font-weight:350;color:#f6f6f6;transform:scaleX(1.0556);transform-origin:0 0;text-shadow:1px 1px 0 rgba(200,135,70,.42)">外構</div>
<div class="a" style="left:8px;top:488px;width:22px;height:20px"><svg width="24" height="22" viewBox="0 0 24 22" style="overflow:visible"><defs><clipPath id="syc"><rect x="0" y="5.600" width="22" height="14"/></clipPath></defs><circle cx="10.600" cy="8.900" r="7.800" fill="#050607" stroke="#9a9ea2" stroke-width="1"/><circle cx="10.600" cy="8.900" r="6.500" fill="#f4f4f4" clip-path="url(#syc)"/><path d="M8.300 5.600v10M12.900 5.600v10" stroke="#050607" stroke-width="1.500"/></svg></div>
<div class="t" style="left:38.0px;top:489.8px;font-size:18px;font-weight:350;color:#f6f6f6;transform:scaleX(1.0347);transform-origin:0 0;text-shadow:1px 1px 0 rgba(200,135,70,.42)">設備記号</div>
<div class="t" style="left:4.5px;top:511.5px;font-size:15px;font-weight:350;color:#5a8be6;transform:scaleX(0.9995);transform-origin:0 0;text-shadow:1px 0 0 rgba(90,110,200,.35)">屋根</div>
<div class="a" style="left:8px;top:534px;width:22px;height:20px"><svg width="24" height="22" viewBox="0 0 24 22" style="overflow:visible"><path d="M12.500 2.500L19.400 10.500L12 14.900L6.500 7z" fill="#0e9cb6"/><path d="M1.800 9.500L12.500 2.500L13.500 4L3 11z" fill="#16aac4"/><path d="M12 14.900L19.400 10.500V11.600L12 16z" fill="#0a6a80"/></svg></div>
<div class="t" style="left:38.0px;top:535.8px;font-size:18px;font-weight:350;color:#f6f6f6;transform:scaleX(1.0417);transform-origin:0 0;text-shadow:1px 1px 0 rgba(200,135,70,.42)">屋根作成</div>
<div class="a" style="left:8px;top:557px;width:22px;height:20px"><svg width="24" height="22" viewBox="0 0 24 22" style="overflow:visible"><defs><linearGradient id="dmg" x1="0" y1="0" x2="1" y2="1"><stop offset="0" stop-color="#3a48d0"/><stop offset=".6" stop-color="#141a98"/><stop offset="1" stop-color="#2a36c0"/></linearGradient></defs><path d="M1.800 8.500L12 1.500L19.400 7L9 15.500z" fill="url(#dmg)"/><path d="M1.800 8.500L9 15.500L19.400 7" fill="none" stroke="#c4cce8" stroke-width="1.100"/></svg></div>
<div class="t" style="left:38.0px;top:558.8px;font-size:18px;font-weight:350;color:#f6f6f6;transform:scaleX(1.0646);transform-origin:0 0;text-shadow:1px 1px 0 rgba(200,135,70,.42)">設備/<span class="kn" style="transform:scaleX(0.780);margin-right:-15.8px">ドーマー</span></div>
<div class="t" style="left:4.5px;top:580.5px;font-size:15px;font-weight:350;color:#5a8be6;transform:scaleX(0.9995);transform-origin:0 0;text-shadow:1px 0 0 rgba(90,110,200,.35)">診断</div>
<div class="a" style="left:8px;top:603px;width:22px;height:20px"><svg width="24" height="22" viewBox="0 0 24 22" style="overflow:visible"><path d="M2.400 2.600H14.200V15.100H2.400zM2.400 15.100L14.200 2.600" fill="none" stroke="#f2ca94" stroke-width="1.500"/><circle cx="15.500" cy="13.500" r="3.200" fill="#a8cef4" stroke="#d8e4f0" stroke-width="1"/><path d="M17.900 16L20.300 18.600" stroke="#d0d4d8" stroke-width="1.500" stroke-linecap="round"/></svg></div>
<div class="t" style="left:38.0px;top:604.8px;font-size:18px;font-weight:350;color:#f6f6f6;transform:scaleX(1.0417);transform-origin:0 0;text-shadow:1px 1px 0 rgba(200,135,70,.42)">簡易構造診断</div>
<div class="a" style="left:8px;top:626px;width:22px;height:20px"><svg width="24" height="22" viewBox="0 0 24 22" style="overflow:visible"><rect x="2.300" y="3.500" width="10.800" height="11.600" fill="#f4f2f0" stroke="#c87a34" stroke-width="1.300"/><rect x="5.300" y="2.300" width="4.800" height="2" fill="#e8dcd0"/><path d="M4.300 8.600L7 11.600L11.600 6" fill="none" stroke="#d82424" stroke-width="1.600"/><circle cx="15.500" cy="13.500" r="3.200" fill="#a8cef4" stroke="#d8e4f0" stroke-width="1"/><path d="M17.900 16L20.300 18.600" stroke="#d0d4d8" stroke-width="1.500" stroke-linecap="round"/></svg></div>
<div class="t" style="left:38.0px;top:627.8px;font-size:18px;font-weight:350;color:#f6f6f6;transform:scaleX(0.9625);transform-origin:0 0;text-shadow:1px 1px 0 rgba(200,135,70,.42)">日影<span class="kn" style="transform:scaleX(0.420);margin-right:-10.4px">・</span><span class="kn" style="transform:scaleX(0.780);margin-right:-7.9px">その</span>他診断</div>
<div class="a" style="left:7px;top:653px;width:153px;height:40px;border:1px solid #3c4248;border-radius:4px;background:#22272c"></div>
<div class="a" style="left:10px;top:656px;width:146px;height:33px;background:linear-gradient(#8fb4ff 0%,#6d8fd8 18%,#46629e 40%,#2a3a62 55%,#2c3c66 75%,#3a4c80 100%);border:1px solid #5a76b8;border-bottom-color:#2a3658"><div class="a" style="left:23.500px;top:2.500px;width:30px;height:28px"><svg width="30" height="28" viewBox="0 0 30 28" style="overflow:visible"><defs><linearGradient id="hxl" x1="0" y1="0" x2="1" y2="1"><stop offset="0" stop-color="#fff"/><stop offset="1" stop-color="#d4dadc"/></linearGradient><linearGradient id="hxr" x1="0" y1="0" x2="1" y2="1"><stop offset="0" stop-color="#dfe6e8"/><stop offset="1" stop-color="#b4c0c4"/></linearGradient><linearGradient id="hxf" x1="0" y1="0" x2="0" y2="1"><stop offset="0" stop-color="#8c9aa0"/><stop offset="1" stop-color="#c0cacc"/></linearGradient></defs><path d="M14.800 .5L29.600 7v13.700L14.800 27.700L0 20.700V7z" fill="#18224a"/><path d="M14.800 1.800L28.400 7.800v12.100L14.800 26.400L1.200 19.900V7.800z" fill="url(#hxf)"/><path d="M14.800 1.800V14L1.200 19.900V7.800z" fill="url(#hxl)"/><path d="M14.800 1.800V14L28.400 19.900V7.800z" fill="url(#hxr)"/><path d="M5.300 11.300L14 7.300l5 2.500L10.500 14z" fill="#a45c12"/><path d="M5.300 11.300L10.500 14v1L5.300 12.300z" fill="#c87a28"/><path d="M6.700 12.800v6M12 14.500v6.300" stroke="#3a2410" stroke-width="1.300"/><path d="M19.500 10.500l3.800-3v6.500l-3.800 2.500z" fill="#2a78b4"/><path d="M15.500 15.300l4-1.300l3.800 .2l-4 2.800z" fill="#4a98cc"/><path d="M19.300 17v2.800M17 21l2.300-1.300l2.500 1.100M18.200 21.800l1-2l1.300 2.200" stroke="#30383e" stroke-width=".8" fill="none"/></svg></div></div>
<div class="t" style="left:71.5px;top:662.5px;font-size:19.5px;font-weight:700;color:#fff;transform:scaleX(1.0168);transform-origin:0 0;text-shadow:0 0 2px #0a1434,0 0 3px #0a1434,0 0 2px #0a1434,1px 1px 2px #0a1434;letter-spacing:.3px">立体化</div>
<div class="a" style="left:473px;top:118px;width:1px;height:43px;background:#323d5c"></div><div class="a" style="left:474px;top:118px;width:1px;height:47px;background:#8d9198"></div>
<div class="a" style="left:174px;top:118px;width:299px;height:43px;background:linear-gradient(#6d84b6 0%,#6479ac 30%,#46578a 70%,#3a4a74 100%);border-left:1px solid #7890c4"></div>
<div class="a" style="left:184px;top:128px;width:250px;height:22px;background:linear-gradient(#3c3c3c 0%,#1c1a1a 45%,#020202 100%)"><div class="a" style="left:234px;top:0;width:1px;height:22px;background:#4a4a4a"></div><div class="a" style="left:239.500px;top:8.500px;width:0;height:0;border-left:3.600px solid transparent;border-right:3.600px solid transparent;border-top:5.500px solid #6a9ade"></div></div>
<div class="a" style="left:440px;top:128px;width:23px;height:22px;background:linear-gradient(#3a3835 0%,#1a1816 45%,#050302 100%)"><svg class="a" style="left:0;top:0" width="23" height="22" viewBox="0 0 23 22"><g transform="translate(8.300,8.500)"><circle r="4.500" fill="#fff"/><rect x="-1.200" y="-6.300" width="2.400" height="2.600" fill="#fff" transform="rotate(0)"/><rect x="-1.200" y="-6.300" width="2.400" height="2.600" fill="#fff" transform="rotate(45)"/><rect x="-1.200" y="-6.300" width="2.400" height="2.600" fill="#fff" transform="rotate(90)"/><rect x="-1.200" y="-6.300" width="2.400" height="2.600" fill="#fff" transform="rotate(135)"/><rect x="-1.200" y="-6.300" width="2.400" height="2.600" fill="#fff" transform="rotate(180)"/><rect x="-1.200" y="-6.300" width="2.400" height="2.600" fill="#fff" transform="rotate(225)"/><rect x="-1.200" y="-6.300" width="2.400" height="2.600" fill="#fff" transform="rotate(270)"/><rect x="-1.200" y="-6.300" width="2.400" height="2.600" fill="#fff" transform="rotate(315)"/><circle r="1.700" fill="#16130f"/></g><g transform="translate(14.600,14.400)"><circle r="3.300" fill="#7ab0e4"/><rect x="-.9" y="-4.700" width="1.800" height="2" fill="#7ab0e4" transform="rotate(22)"/><rect x="-.9" y="-4.700" width="1.800" height="2" fill="#7ab0e4" transform="rotate(67)"/><rect x="-.9" y="-4.700" width="1.800" height="2" fill="#7ab0e4" transform="rotate(112)"/><rect x="-.9" y="-4.700" width="1.800" height="2" fill="#7ab0e4" transform="rotate(157)"/><rect x="-.9" y="-4.700" width="1.800" height="2" fill="#7ab0e4" transform="rotate(202)"/><rect x="-.9" y="-4.700" width="1.800" height="2" fill="#7ab0e4" transform="rotate(247)"/><rect x="-.9" y="-4.700" width="1.800" height="2" fill="#7ab0e4" transform="rotate(292)"/><rect x="-.9" y="-4.700" width="1.800" height="2" fill="#7ab0e4" transform="rotate(337)"/><circle r="1.400" fill="#0c0a08"/></g></svg></div>
<div class="t" style="left:185.5px;top:131.0px;font-size:14px;font-weight:350;color:#fff;transform:scaleX(0.9538);transform-origin:0 0;">1 階</div>
<div class="a" style="left:174px;top:165px;width:300px;height:749px;background:#565b5f"></div>
<div class="a" style="left:474px;top:165px;width:1px;height:749px;background:#8d9198"></div>
<div class="a" style="left:174px;top:914px;width:300px;height:1px;background:#8a8e92"></div>
<div class="a" style="left:174px;top:165px;width:149px;height:34px;background:linear-gradient(#8e9296 0%,#777b7f 25%,#5c6165 70%,#565b5f 100%);border-top:1px solid #a4a8ac"></div>
<div class="a" style="left:323px;top:165px;width:151px;height:34px;background:linear-gradient(#42474c 0%,#33383d 50%,#24282c 100%);border-left:1px solid #1e2226;border-bottom:1px solid #1c1f23"></div>
<div class="t" style="left:198.5px;top:171.5px;font-size:14.5px;font-weight:350;color:#dcdcdc;transform:scaleX(1.0370);transform-origin:0 0;">四角形<span class="kn" style="transform:scaleX(0.500);margin-right:-7.0px">・</span>多角形</div>
<div class="a" style="left:190px;top:192.5px;width:117px;height:3px;border-radius:2px;background:#e6c45a;box-shadow:0 0 3px 1px rgba(226,170,40,.75)"></div>
<div class="t" style="left:367.5px;top:171.5px;font-size:14.5px;font-weight:350;color:#e8e8e8;transform:scaleX(1.0363);transform-origin:0 0;">部屋<span class="kn" style="transform:scaleX(0.720);margin-right:-12.2px">セット</span></div>
<div class="t" style="left:184.5px;top:214.0px;font-size:15px;font-weight:400;color:#f0c233;transform:scaleX(0.9998);transform-origin:0 0;">四角形配置</div>
<div class="a" style="left:374px;top:215px;width:15px;height:15px;border:1px solid #b4b4b4"></div>
<div class="t" style="left:390.5px;top:215.0px;font-size:14.5px;font-weight:350;color:#e4e4e4;transform:scaleX(1.0000);transform-origin:0 0;">部屋の説明</div>
<div class="a" style="left:174px;top:242px;width:300px;height:1px;background:#868a8e"></div>
<svg class="a" style="left:184px;top:246px" width="13" height="12" viewBox="0 0 13 12"><path d="M.8 1.300h4.400l1 1.200H12v8.600H.8z" fill="#fff" stroke="#8a7a40" stroke-width=".7"/></svg>
<div class="t" style="left:203.5px;top:245.2px;font-size:14.5px;font-weight:400;color:#fff;transform:scaleX(1.0345);transform-origin:0 0;text-shadow:0 0 2px #f0b010,0 0 2px #f0b010,0 0 3px #e8a808,0 0 1px #f0b010">居住</div>
<svg class="a" style="left:280px;top:246px" width="13" height="12" viewBox="0 0 13 12"><path d="M1 2h4l1.200 1.300H11.500v7.200H1z" fill="none" stroke="#3c4146" stroke-width="1.100"/></svg>
<div class="t" style="left:299.5px;top:244.5px;font-size:14px;font-weight:350;color:#d6d6d6;transform:scaleX(1.0179);transform-origin:0 0;">共用</div>
<div class="a" style="left:378px;top:245px;width:13px;height:13px;border-radius:2px;background:#474d59"><svg class="a" style="left:1px;top:1px" width="11" height="11" viewBox="0 0 11 11"><path d="M5.500 .8l1.400 3.100l3.300.3l-2.500 2.200l.8 3.300L5.500 8L2.500 9.700l.8-3.300L.8 4.200l3.300-.3z" fill="#5d626a"/></svg></div>
<div class="t" style="left:394.0px;top:244.5px;font-size:14px;font-weight:350;color:#e0e0e0;transform:scaleX(0.9429);transform-origin:0 0;">お気に入り</div>
<div class="a" style="left:174px;top:262px;width:300px;height:518px;overflow:hidden">
<div class="tile" style="left:18px;top:17px;background:#e8d8ba"><svg class="a" style="left:0;top:0" width="64" height="51" viewBox="0 0 64 51"><path d="M0 3.5h64M0 11.5h64M0 18.5h64M0 26.5h64M0 33.5h64M0 40.5h64M0 48.5h64" stroke="#c9b8a4" stroke-width="1"/></svg></div>
<div class="t" style="left:29.5px;top:35.9px;font-size:15px;font-weight:400;color:#000;font-family:'Liberation Sans','IPAGothic',sans-serif;transform:scaleX(1.0000);transform-origin:50% 0;text-shadow:0 0 2px rgba(255,255,255,.75),0 0 1px rgba(255,255,255,.6)">家事室</div>
<div class="tile" style="left:103px;top:17px;background:#e8d8ba"><svg class="a" style="left:0;top:0" width="64" height="51" viewBox="0 0 64 51"><path d="M0 3.5h64M0 11.5h64M0 18.5h64M0 26.5h64M0 33.5h64M0 40.5h64M0 48.5h64" stroke="#c9b8a4" stroke-width="1"/></svg></div>
<div class="t" style="left:122.0px;top:35.9px;font-size:15px;font-weight:400;color:#000;font-family:'Liberation Sans','IPAGothic',sans-serif;transform:scaleX(1.0233);transform-origin:50% 0;text-shadow:0 0 2px rgba(255,255,255,.75),0 0 1px rgba(255,255,255,.6)">洋室</div>
<div class="tile" style="left:188px;top:17px;background:#e8d8ba"><svg class="a" style="left:0;top:0" width="64" height="51" viewBox="0 0 64 51"><path d="M0 3.5h64M0 11.5h64M0 18.5h64M0 26.5h64M0 33.5h64M0 40.5h64M0 48.5h64" stroke="#c9b8a4" stroke-width="1"/></svg></div>
<div class="t" style="left:207.0px;top:35.9px;font-size:15px;font-weight:400;color:#000;font-family:'Liberation Sans','IPAGothic',sans-serif;transform:scaleX(1.0167);transform-origin:50% 0;text-shadow:0 0 2px rgba(255,255,255,.75),0 0 1px rgba(255,255,255,.6)">寝室</div>
<div class="tile" style="left:18px;top:93px;background:#e8d8ba"><svg class="a" style="left:0;top:0" width="64" height="51" viewBox="0 0 64 51"><path d="M0 3.5h64M0 11.5h64M0 18.5h64M0 26.5h64M0 33.5h64M0 40.5h64M0 48.5h64" stroke="#c9b8a4" stroke-width="1"/></svg></div>
<div class="t" style="left:37.0px;top:111.9px;font-size:15px;font-weight:400;color:#000;font-family:'Liberation Sans','IPAGothic',sans-serif;transform:scaleX(1.0167);transform-origin:50% 0;text-shadow:0 0 2px rgba(255,255,255,.75),0 0 1px rgba(255,255,255,.6)">書斎</div>
<div class="tile" style="left:103px;top:93px;background:#e8d8ba"><svg class="a" style="left:0;top:0" width="64" height="51" viewBox="0 0 64 51"><path d="M0 3.5h64M0 11.5h64M0 18.5h64M0 26.5h64M0 33.5h64M0 40.5h64M0 48.5h64" stroke="#c9b8a4" stroke-width="1"/></svg></div>
<div class="t" style="left:114.5px;top:111.9px;font-size:15px;font-weight:400;color:#000;font-family:'Liberation Sans','IPAGothic',sans-serif;transform:scaleX(1.0000);transform-origin:50% 0;text-shadow:0 0 2px rgba(255,255,255,.75),0 0 1px rgba(255,255,255,.6)">子供室</div>
<div class="tile" style="left:188px;top:93px;background:#d1d8c0"></div>
<div class="t" style="left:207.0px;top:111.9px;font-size:15px;font-weight:400;color:#000;font-family:'Liberation Sans','IPAGothic',sans-serif;transform:scaleX(1.0167);transform-origin:50% 0;text-shadow:0 0 2px rgba(255,255,255,.75),0 0 1px rgba(255,255,255,.6)">和室</div>
<div class="tile" style="left:18px;top:169px;background:#dbd1c5"><svg class="a" style="left:0;top:0" width="64" height="51" viewBox="0 0 64 51"><path d="M0 6q16 -3 32 0t32 -1M0 13q20 3 40 -1t24 2M0 20q14 -2 30 1t34 -2M0 27q18 3 36 0t28 1M0 34q16 -3 34 0t30 0M0 41q20 2 38 -1t26 2M0 47q16 -2 32 0t32 -1" fill="none" stroke="#cfc2b2" stroke-width="1"/><path d="M4 9q8 -4 18 0M6 10.500q7 -2 13 0" fill="none" stroke="#cabcac" stroke-width=".8"/></svg></div>
<div class="t" style="left:29.5px;top:187.9px;font-size:15px;font-weight:400;color:#000;font-family:'Liberation Sans','IPAGothic',sans-serif;transform:scaleX(1.0222);transform-origin:50% 0;text-shadow:0 0 2px rgba(255,255,255,.75),0 0 1px rgba(255,255,255,.6)">床の間</div>
<div class="tile" style="left:103px;top:169px;background:#dbd1c5"><svg class="a" style="left:0;top:0" width="64" height="51" viewBox="0 0 64 51"><path d="M0 6q16 -3 32 0t32 -1M0 13q20 3 40 -1t24 2M0 20q14 -2 30 1t34 -2M0 27q18 3 36 0t28 1M0 34q16 -3 34 0t30 0M0 41q20 2 38 -1t26 2M0 47q16 -2 32 0t32 -1" fill="none" stroke="#cfc2b2" stroke-width="1"/><path d="M4 9q8 -4 18 0M6 10.500q7 -2 13 0" fill="none" stroke="#cabcac" stroke-width=".8"/></svg></div>
<div class="t" style="left:122.0px;top:187.9px;font-size:15px;font-weight:400;color:#000;font-family:'Liberation Sans','IPAGothic',sans-serif;transform:scaleX(1.0167);transform-origin:50% 0;text-shadow:0 0 2px rgba(255,255,255,.75),0 0 1px rgba(255,255,255,.6)">仏間</div>
<div class="tile" style="left:188px;top:169px;background:#e8d8ba"><svg class="a" style="left:0;top:0" width="64" height="51" viewBox="0 0 64 51"><path d="M0 3.5h64M0 11.5h64M0 18.5h64M0 26.5h64M0 33.5h64M0 40.5h64M0 48.5h64" stroke="#c9b8a4" stroke-width="1"/></svg></div>
<div class="t" style="left:207.0px;top:187.9px;font-size:15px;font-weight:400;color:#000;font-family:'Liberation Sans','IPAGothic',sans-serif;transform:scaleX(1.0167);transform-origin:50% 0;text-shadow:0 0 2px rgba(255,255,255,.75),0 0 1px rgba(255,255,255,.6)">広縁</div>
<div class="tile" style="left:18px;top:245px;background:#bababa"></div>
<div class="t" style="left:37.0px;top:263.9px;font-size:15px;font-weight:400;color:#000;font-family:'Liberation Sans','IPAGothic',sans-serif;transform:scaleX(1.0167);transform-origin:50% 0;text-shadow:0 0 2px rgba(255,255,255,.75),0 0 1px rgba(255,255,255,.6)">押入</div>
<div class="tile" style="left:103px;top:245px;background:#bababa"></div>
<div class="t" style="left:99.5px;top:263.9px;font-size:15px;font-weight:400;color:#000;font-family:'Liberation Sans','IPAGothic',sans-serif;transform:scaleX(0.6667);transform-origin:50% 0;text-shadow:0 0 2px rgba(255,255,255,.75),0 0 1px rgba(255,255,255,.6)">クロゼット</div>
<div class="tile" style="left:188px;top:245px;background:#bababa"></div>
<div class="t" style="left:207.0px;top:263.9px;font-size:15px;font-weight:400;color:#000;font-family:'Liberation Sans','IPAGothic',sans-serif;transform:scaleX(1.0167);transform-origin:50% 0;text-shadow:0 0 2px rgba(255,255,255,.75),0 0 1px rgba(255,255,255,.6)">物入</div>
<div class="tile" style="left:18px;top:321px;background:#bababa"></div>
<div class="t" style="left:37.0px;top:339.9px;font-size:15px;font-weight:400;color:#000;font-family:'Liberation Sans','IPAGothic',sans-serif;transform:scaleX(1.0167);transform-origin:50% 0;text-shadow:0 0 2px rgba(255,255,255,.75),0 0 1px rgba(255,255,255,.6)">納戸</div>
<div class="tile" style="left:103px;top:321px;background:#dadada"></div>
<div class="t" style="left:127.0px;top:339.9px;font-size:15px;font-weight:400;color:#000;font-family:'Liberation Sans','IPAGothic',sans-serif;transform:scaleX(0.9243);transform-origin:50% 0;text-shadow:0 0 2px rgba(255,255,255,.75),0 0 1px rgba(255,255,255,.6)">PS</div>
<div class="tile" style="left:188px;top:321px;background:#d2d2d2"><svg class="a" style="left:0;top:0" width="64" height="51" viewBox="0 0 64 51"><path d="M3.5 0v51M11.5 0v51M18.5 0v51M26.5 0v51M33.5 0v51M41.5 0v51M48.5 0v51M56.5 0v51M63.5 0v51M0 3.5h64M0 11.5h64M0 18.5h64M0 26.5h64M0 33.5h64M0 40.5h64M0 48.5h64" stroke="#ececec" stroke-width="1" fill="none"/></svg></div>
<div class="t" style="left:199.5px;top:339.9px;font-size:15px;font-weight:400;color:#000;font-family:'Liberation Sans','IPAGothic',sans-serif;transform:scaleX(0.9333);transform-origin:50% 0;text-shadow:0 0 2px rgba(255,255,255,.75),0 0 1px rgba(255,255,255,.6)">ポーチ</div>
<div class="tile" style="left:18px;top:397px;background:#dadada"></div>
<div class="t" style="left:14.5px;top:415.9px;font-size:15px;font-weight:400;color:#000;font-family:'Liberation Sans','IPAGothic',sans-serif;transform:scaleX(0.7667);transform-origin:50% 0;text-shadow:0 0 2px rgba(255,255,255,.75),0 0 1px rgba(255,255,255,.6)">バルコニー</div>
<div class="tile" style="left:103px;top:397px;background:#dadada"></div>
<div class="t" style="left:107.0px;top:408.6px;font-size:15px;font-weight:400;color:#000;font-family:'Liberation Sans','IPAGothic',sans-serif;transform:scaleX(0.8917);transform-origin:50% 0;text-shadow:0 0 2px rgba(255,255,255,.75),0 0 1px rgba(255,255,255,.6)">インナー</div>
<div class="t" style="left:107.0px;top:423.1px;font-size:15px;font-weight:400;color:#000;font-family:'Liberation Sans','IPAGothic',sans-serif;transform:scaleX(0.9500);transform-origin:50% 0;text-shadow:0 0 2px rgba(255,255,255,.75),0 0 1px rgba(255,255,255,.6)">ガレージ</div>
<div class="tile" style="left:188px;top:397px;background:#dadada"></div>
<div class="t" style="left:207.0px;top:415.9px;font-size:15px;font-weight:400;color:#000;font-family:'Liberation Sans','IPAGothic',sans-serif;transform:scaleX(1.0167);transform-origin:50% 0;text-shadow:0 0 2px rgba(255,255,255,.75),0 0 1px rgba(255,255,255,.6)">土間</div>
<div class="tile" style="left:18px;top:473px;background:#d2d2d2"><svg class="a" style="left:0;top:0" width="64" height="51" viewBox="0 0 64 51"><path d="M3.5 0v51M11.5 0v51M18.5 0v51M26.5 0v51M33.5 0v51M41.5 0v51M48.5 0v51M56.5 0v51M63.5 0v51M0 3.5h64M0 11.5h64M0 18.5h64M0 26.5h64M0 33.5h64M0 40.5h64M0 48.5h64" stroke="#ececec" stroke-width="1" fill="none"/></svg></div>
<div class="t" style="left:22.0px;top:484.6px;font-size:15px;font-weight:400;color:#000;font-family:'Liberation Sans','IPAGothic',sans-serif;transform:scaleX(0.8750);transform-origin:50% 0;text-shadow:0 0 2px rgba(255,255,255,.75),0 0 1px rgba(255,255,255,.6)">カバード</div>
<div class="t" style="left:29.5px;top:499.1px;font-size:15px;font-weight:400;color:#000;font-family:'Liberation Sans','IPAGothic',sans-serif;transform:scaleX(0.9333);transform-origin:50% 0;text-shadow:0 0 2px rgba(255,255,255,.75),0 0 1px rgba(255,255,255,.6)">ポーチ</div>
<div class="tile" style="left:103px;top:473px;background:#e8d8ba"><svg class="a" style="left:0;top:0" width="64" height="51" viewBox="0 0 64 51"><path d="M0 3.5h64M0 11.5h64M0 18.5h64M0 26.5h64M0 33.5h64M0 40.5h64M0 48.5h64" stroke="#c9b8a4" stroke-width="1"/></svg></div>
<div class="t" style="left:114.5px;top:491.9px;font-size:15px;font-weight:400;color:#000;font-family:'Liberation Sans','IPAGothic',sans-serif;transform:scaleX(1.0000);transform-origin:50% 0;text-shadow:0 0 2px rgba(255,255,255,.75),0 0 1px rgba(255,255,255,.6)">小屋裏</div>
<div class="tile" style="left:188px;top:473px;background:#e8d8b8"></div>
<div class="t" style="left:199.5px;top:484.6px;font-size:15px;font-weight:400;color:#000;font-family:'Liberation Sans','IPAGothic',sans-serif;transform:scaleX(1.0000);transform-origin:50% 0;text-shadow:0 0 2px rgba(255,255,255,.75),0 0 1px rgba(255,255,255,.6)">小屋裏</div>
<div class="t" style="left:207.0px;top:499.1px;font-size:15px;font-weight:400;color:#000;font-family:'Liberation Sans','IPAGothic',sans-serif;transform:scaleX(1.0167);transform-origin:50% 0;text-shadow:0 0 2px rgba(255,255,255,.75),0 0 1px rgba(255,255,255,.6)">開口</div>
<div class="a" style="left:13px;top:316px;width:79px;height:65px;border:2px solid #f0c040"></div>
</div>
<div class="a" style="left:440px;top:268px;width:16px;height:513px;background:#31363b"></div>
<div class="a" style="left:441px;top:402px;width:14px;height:182px;background:#585d61"></div>
<svg class="a" style="left:442px;top:270px" width="12" height="8" viewBox="0 0 12 8"><path d="M.5 6.500h11L7.500 2.200h-3z" fill="#fff"/></svg>
<svg class="a" style="left:442px;top:769px" width="12" height="8" viewBox="0 0 12 8"><path d="M.5 1.500h11L7.500 5.800h-3z" fill="#fff"/></svg>
<div class="a" style="left:174px;top:787px;width:300px;height:1px;background:#464b50"></div>
<div class="t" style="left:183.5px;top:802.0px;font-size:15px;font-weight:400;color:#f0c233;transform:scaleX(0.9865);transform-origin:0 0;">多角形入力</div>
<div class="a" style="left:195px;top:829px;width:74px;height:74px;border:1px solid #484d52;background:linear-gradient(#3c4146 0%,#24282c 45%,#08090a 80%,#000 100%)"><svg class="a" style="left:12px;top:7px" width="50" height="42" viewBox="0 0 50 42"><defs><linearGradient id="pl" x1="0" y1="0" x2="1" y2="1"><stop offset="0" stop-color="#f2d08a"/><stop offset="1" stop-color="#a88658"/></linearGradient></defs><path d="M2 2.500h19L46 16.500V38H2z" fill="url(#pl)" stroke="#9a9ea2" stroke-width="1.400"/></svg></div>
<div class="t" style="left:209.5px;top:884.0px;font-size:15px;font-weight:350;color:#fff;transform:scaleX(1.0108);transform-origin:0 0;">多角形</div>
<div class="t" style="left:279.5px;top:828.0px;font-size:14.5px;font-weight:350;color:#e0e0e0;transform:scaleX(1.0690);transform-origin:0 0;">①</div>
<div class="t" style="left:299.5px;top:828.0px;font-size:14.5px;font-weight:350;color:#e0e0e0;transform:scaleX(0.9376);transform-origin:0 0;"><span class="kn" style="transform:scaleX(0.600);margin-right:-5.8px">【</span>多角形<span class="kn" style="transform:scaleX(0.600);margin-right:-5.8px">】</span><span class="kn" style="transform:scaleX(0.720);margin-right:-12.2px">ボタン</span>を押す。</div>
<div class="t" style="left:279.5px;top:846.5px;font-size:14.5px;font-weight:350;color:#e0e0e0;transform:scaleX(1.0690);transform-origin:0 0;">②</div>
<div class="t" style="left:299.5px;top:846.5px;font-size:14.5px;font-weight:350;color:#e0e0e0;transform:scaleX(0.9064);transform-origin:0 0;">部屋の頂点を順に<span class="kn" style="transform:scaleX(0.680);margin-right:-18.6px">クリック</span>。</div>
<div class="t" style="left:279.5px;top:865.0px;font-size:14.5px;font-weight:350;color:#e0e0e0;transform:scaleX(1.0690);transform-origin:0 0;">③</div>
<div class="t" style="left:299.5px;top:865.0px;font-size:14.5px;font-weight:350;color:#e0e0e0;transform:scaleX(0.8945);transform-origin:0 0;">最後に始点に戻って完了。</div>
<div class="a" style="left:280px;top:888px;width:15px;height:15px;background:#3c96f2;color:#e8f4ff;font-size:13px;line-height:15px;text-align:center">?</div>
<div class="t" style="left:298.0px;top:888.0px;font-size:15px;font-weight:350;color:#78c0f8;transform:scaleX(0.9862);transform-origin:0 0;text-decoration:underline;text-decoration-color:rgba(120,192,248,.22);text-underline-offset:1px">頂点の移動<span class="kn" style="transform:scaleX(0.500);margin-right:-7.5px">・</span>追加<span class="kn" style="transform:scaleX(0.500);margin-right:-7.5px">・</span>削除</div>
<div class="a" style="left:475px;top:118px;width:861px;height:796px;background:#7a7f83"></div>
<div class="a" style="left:1335px;top:113px;width:6px;height:807px;background:linear-gradient(90deg,#171b1f,#101316 50%,#050608)"></div>
<svg class="a" style="left:475px;top:118px" width="861" height="796" viewBox="475 118 861 796"><rect x="501" y="144" width="814" height="751" fill="#fff"/><path d="M515.5 138v4M565.5 133v9M615.5 138v4M665.5 133v9M715.5 138v4M765.5 133v9M815.5 138v4M865.5 133v9M915.5 138v4M965.5 133v9M1015.5 138v4M1065.5 133v9M1115.5 138v4M1165.5 133v9M1215.5 138v4M1265.5 133v9M1315.5 138v4M495 162.5h4M491 212.5h8M495 262.5h4M491 312.5h8M495 362.5h4M491 412.5h8M495 462.5h4M491 512.5h8M495 562.5h4M491 612.5h8M495 662.5h4M491 712.5h8M495 762.5h4M491 812.5h8M495 862.5h4" stroke="#fff" stroke-width="1.300"/><path d="M514 162h2M514 262h2M514 362h2M514 462h2M514 562h2M514 662h2M514 762h2M514 862h2M614 162h2M614 262h2M614 362h2M614 462h2M614 562h2M614 662h2M614 762h2M614 862h2M714 162h2M714 262h2M714 362h2M714 462h2M714 562h2M714 662h2M714 762h2M714 862h2M814 162h2M814 262h2M814 362h2M814 462h2M814 562h2M814 662h2M814 762h2M814 862h2M914 162h2M914 262h2M914 362h2M914 462h2M914 562h2M914 662h2M914 762h2M914 862h2M1014 162h2M1014 262h2M1014 362h2M1014 462h2M1014 562h2M1014 662h2M1014 762h2M1014 862h2M1114 162h2M1114 262h2M1114 362h2M1114 462h2M1114 562h2M1114 662h2M1114 762h2M1114 862h2M1214 162h2M1214 262h2M1214 362h2M1214 462h2M1214 562h2M1214 662h2M1214 762h2M1214 862h2" stroke="#bdbdbd" stroke-width="2"/><path d="M565.5 144V895M765.5 144V895M865.5 144V895M965.5 144V895M1065.5 144V895M1265.5 144V895" stroke="#bfbfbf" stroke-width="1" stroke-dasharray="2 2" stroke-dashoffset="1" fill="none"/><path d="M501 212.5H1315M501 412.5H1315M501 512.5H1315M501 612.5H1315M501 712.5H1315" stroke="#bfbfbf" stroke-width="1" stroke-dasharray="2 2" fill="none"/><path d="M665.500 144V895M1165.500 144V895M501 312.500H1315M501 812.500H1315" stroke="#c6c6c6" stroke-width="1.200" fill="none"/><path d="M665.500 212V312.500M565 312.500H665.500" stroke="#058805" stroke-width="1.100" fill="none"/><rect x="660.500" y="307.500" width="510" height="410" fill="#6b6c6e" stroke="#5c5f68" stroke-width="1"/><defs><pattern id="fl" x="0" y="320" width="40" height="15" patternUnits="userSpaceOnUse"><rect width="40" height="15" fill="#e8d8ba"/><rect y="7" width="40" height="1" fill="#c9b8a2"/></pattern></defs><path d="M671 319H1060V518H1160V707H671z" fill="url(#fl)"/><rect x="1071" y="319" width="89" height="188" fill="#bababa"/><path d="M765.5 319V707M865.5 319V707M965.5 319V707M1065.5 519V707" stroke="#d2d2d6" stroke-width="1" stroke-dasharray="2 2" fill="none"/><path d="M673 412.5H1060M673 512.5H1060M673 612.5H1160M1073 412.5H1160" stroke="#d2d2d6" stroke-width="1" stroke-dasharray="2 2" fill="none"/><path d="M714 362h2M714 462h2M714 562h2M714 662h2M814 362h2M814 462h2M814 562h2M814 662h2M914 362h2M914 462h2M914 562h2M914 662h2M1014 362h2M1014 462h2M1014 562h2M1014 662h2M1114 362h2M1114 462h2M1114 562h2M1114 662h2" stroke="#d4cfc8" stroke-width="2"/><text x="1094.500" y="417" font-family="Liberation Sans,Noto Sans CJK JP,sans-serif" font-size="20.500" font-weight="350" fill="#0a0a0a">納戸</text></svg>
<div class="a" style="left:1315px;top:144px;width:19px;height:770px;background:#f0f0f0"></div>
<div class="a" style="left:501px;top:895px;width:833px;height:19px;background:#f0f0f0"></div>
<div class="a" style="left:1334px;top:144px;width:1px;height:771px;background:#fff"></div>
<div class="a" style="left:501px;top:914px;width:834px;height:1px;background:#fff"></div>
<div class="a" style="left:1315px;top:549px;width:19px;height:21px;background:#cdcdcd"></div>
<div class="a" style="left:934px;top:895px;width:21px;height:19px;background:#cdcdcd"></div>
<svg class="a" style="left:1318px;top:149px" width="13" height="12" viewBox="0 0 13 12"><path d="M2.200 8.800L6.500 4.300l4.300 4.500" fill="none" stroke="#505050" stroke-width="1.700"/></svg>
<svg class="a" style="left:1318px;top:878px" width="13" height="12" viewBox="0 0 13 12"><path d="M2.200 3.700L6.500 8.200l4.300-4.500" fill="none" stroke="#505050" stroke-width="1.700"/></svg>
<svg class="a" style="left:504px;top:898px" width="12" height="13" viewBox="0 0 12 13"><path d="M9.200 2.200L4.200 6.500l5 4.300" fill="none" stroke="#505050" stroke-width="1.700"/></svg>
<svg class="a" style="left:1297px;top:898px" width="12" height="13" viewBox="0 0 12 13"><path d="M3.800 2.200L8.800 6.500l-5 4.300" fill="none" stroke="#505050" stroke-width="1.700"/></svg>
<div class="a" style="left:1341px;top:113px;width:250px;height:807px;background:#1e2328"></div>
<div class="a" style="left:1560px;top:115px;width:22px;height:23px;border:1px solid #5c6064;border-top-color:#6c7074"></div>
<div class="a" style="left:1561px;top:117px;width:20px;height:20px;border:1px solid #e4e4ec;background:#181c20"><div class="a" style="left:14px;top:.5px;width:4px;height:17px;background:#f4c020"></div><svg class="a" style="left:2px;top:1px" width="10" height="16" viewBox="0 0 10 16"><path d="M1.800 1v14L8.600 8z" fill="#dcdcf0"/></svg></div>
</body></html>
